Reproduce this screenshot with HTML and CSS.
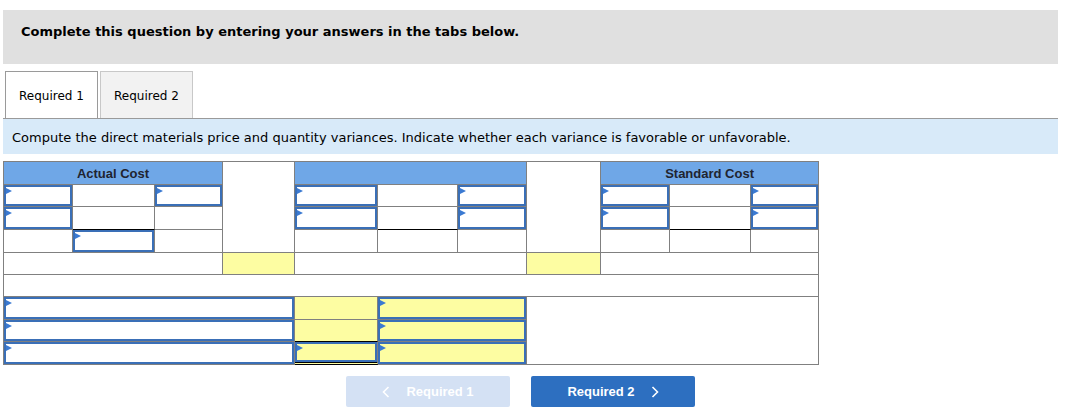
FILE: index.html
```html
<!DOCTYPE html>
<html lang="en">
<head>
  <meta charset="UTF-8">
  <title>Required 1</title>
  <link rel="stylesheet" href="styles.css">
</head>
<body>
  <div class="banner">Complete this question by entering your answers in the tabs below.</div>

  <div class="tabs">
    <div class="tab active">Required 1</div>
    <div class="tab">Required 2</div>
  </div>

  <div class="prompt">Compute the direct materials price and quantity variances. Indicate whether each variance is favorable or unfavorable.</div>

  <table class="grid">
    <colgroup>
      <col style="width:69px"><col style="width:82px"><col style="width:68px">
      <col style="width:72px">
      <col style="width:83px"><col style="width:80px"><col style="width:69px">
      <col style="width:74px">
      <col style="width:69px"><col style="width:81px"><col style="width:68px">
    </colgroup>
    <tr class="r23">
      <th colspan="3">Actual Cost</th>
      <td rowspan="4"></td>
      <th colspan="3"></th>
      <td rowspan="4"></td>
      <th colspan="3">Standard Cost</th>
    </tr>
    <tr class="r22">
      <td class="in"></td><td></td><td class="in"></td>
      <td class="in"></td><td></td><td class="in"></td>
      <td class="in"></td><td></td><td class="in"></td>
    </tr>
    <tr class="r23">
      <td class="in"></td><td class="sum"></td><td></td>
      <td class="in"></td><td class="sum"></td><td class="in"></td>
      <td class="in"></td><td class="sum"></td><td class="in"></td>
    </tr>
    <tr class="r23">
      <td></td><td class="in"></td><td></td>
      <td></td><td></td><td></td>
      <td></td><td></td><td></td>
    </tr>
    <tr class="r22">
      <td colspan="3"></td>
      <td class="yel"></td>
      <td colspan="3"></td>
      <td class="yel"></td>
      <td colspan="3"></td>
    </tr>
    <tr class="r22">
      <td colspan="11"></td>
    </tr>
    <tr class="r23">
      <td colspan="4" class="in"></td>
      <td class="yel"></td>
      <td colspan="2" class="in yel"></td>
      <td colspan="4" rowspan="3"></td>
    </tr>
    <tr class="r22">
      <td colspan="4" class="in"></td>
      <td class="yel sum"></td>
      <td colspan="2" class="in yel"></td>
    </tr>
    <tr class="r23">
      <td colspan="4" class="in"></td>
      <td class="in yel total"></td>
      <td colspan="2" class="in yel"></td>
    </tr>
  </table>

  <div class="nav">
    <button class="btn prev" disabled>
      <svg width="8" height="12" viewBox="0 0 8 12"><path d="M6.5 1 L1.5 6 L6.5 11" fill="none" stroke="currentColor" stroke-width="1.6"/></svg>
      Required 1
    </button>
    <button class="btn next">
      Required 2
      <svg width="8" height="12" viewBox="0 0 8 12"><path d="M1.5 1 L6.5 6 L1.5 11" fill="none" stroke="currentColor" stroke-width="1.6"/></svg>
    </button>
  </div>
</body>
</html>
```

FILE: styles.css
```css
body {
  margin: 0;
  padding: 10px 16px 0 3px;
  font-family: "DejaVu Sans", Verdana, sans-serif;
  font-size: 13px;
  color: #000;
  background: #fff;
}

.banner {
  height: 54px;
  line-height: 44px;
  padding-left: 18px;
  background: #e0e0e0;
  font-weight: bold;
}

.tabs {
  display: flex;
  gap: 2px;
  margin-top: 7px;
  padding-left: 2px;
  height: 47px;
  border-bottom: 1px solid #9a9a9a;
}

.tab {
  width: 91px;
  line-height: 48px;
  font-size: 12px;
  text-align: center;
  border: 1px solid #c8c8c8;
  border-bottom: none;
  background: #f2f2f2;
}

.tab.active {
  background: #fff;
  border-color: #9a9a9a;
}

.prompt {
  height: 35px;
  line-height: 37px;
  padding-left: 9px;
  background: #d8eaf9;
}

.grid {
  margin-top: 7px;
  border-collapse: separate;
  border-spacing: 0;
  table-layout: fixed;
  width: 816px;
  border-top: 1px solid #808080;
  border-left: 1px solid #808080;
}

.grid th,
.grid td {
  padding: 0;
  border-right: 1px solid #808080;
  border-bottom: 1px solid #808080;
  background: #fff;
}

.grid tr.r23 { height: 23px; }
.grid tr.r22 { height: 22px; }

.grid th {
  background: #6fa7e7;
  font-family: "Liberation Sans", Arial, sans-serif;
  font-size: 13px;
  font-weight: bold;
  color: #1f2430;
}

.grid td.yel {
  background: #fdfda2;
}

.grid td.in {
  position: relative;
  box-shadow: inset 0 0 0 2px #3a6fb7;
}

.grid td.in::before {
  content: '';
  position: absolute;
  left: 2px;
  top: 3px;
  border-left: 6px solid #3b7ad2;
  border-top: 3px solid transparent;
  border-bottom: 3px solid transparent;
}

.grid td.sum {
  border-bottom-color: #000;
}

.grid td.total {
  border-bottom: 3px double #000;
}

.nav {
  display: flex;
  gap: 21px;
  margin-top: 11px;
  padding-left: 343px;
}

.btn {
  display: flex;
  align-items: center;
  justify-content: center;
  gap: 16px;
  width: 164px;
  height: 31px;
  border: none;
  border-radius: 2px;
  font-family: "Liberation Sans", Arial, sans-serif;
  font-size: 13px;
  font-weight: bold;
  color: #fff;
  cursor: pointer;
}

.btn.prev {
  background: #d4e1f4;
  cursor: default;
}

.btn.next {
  background: #2d6fc0;
}
```
